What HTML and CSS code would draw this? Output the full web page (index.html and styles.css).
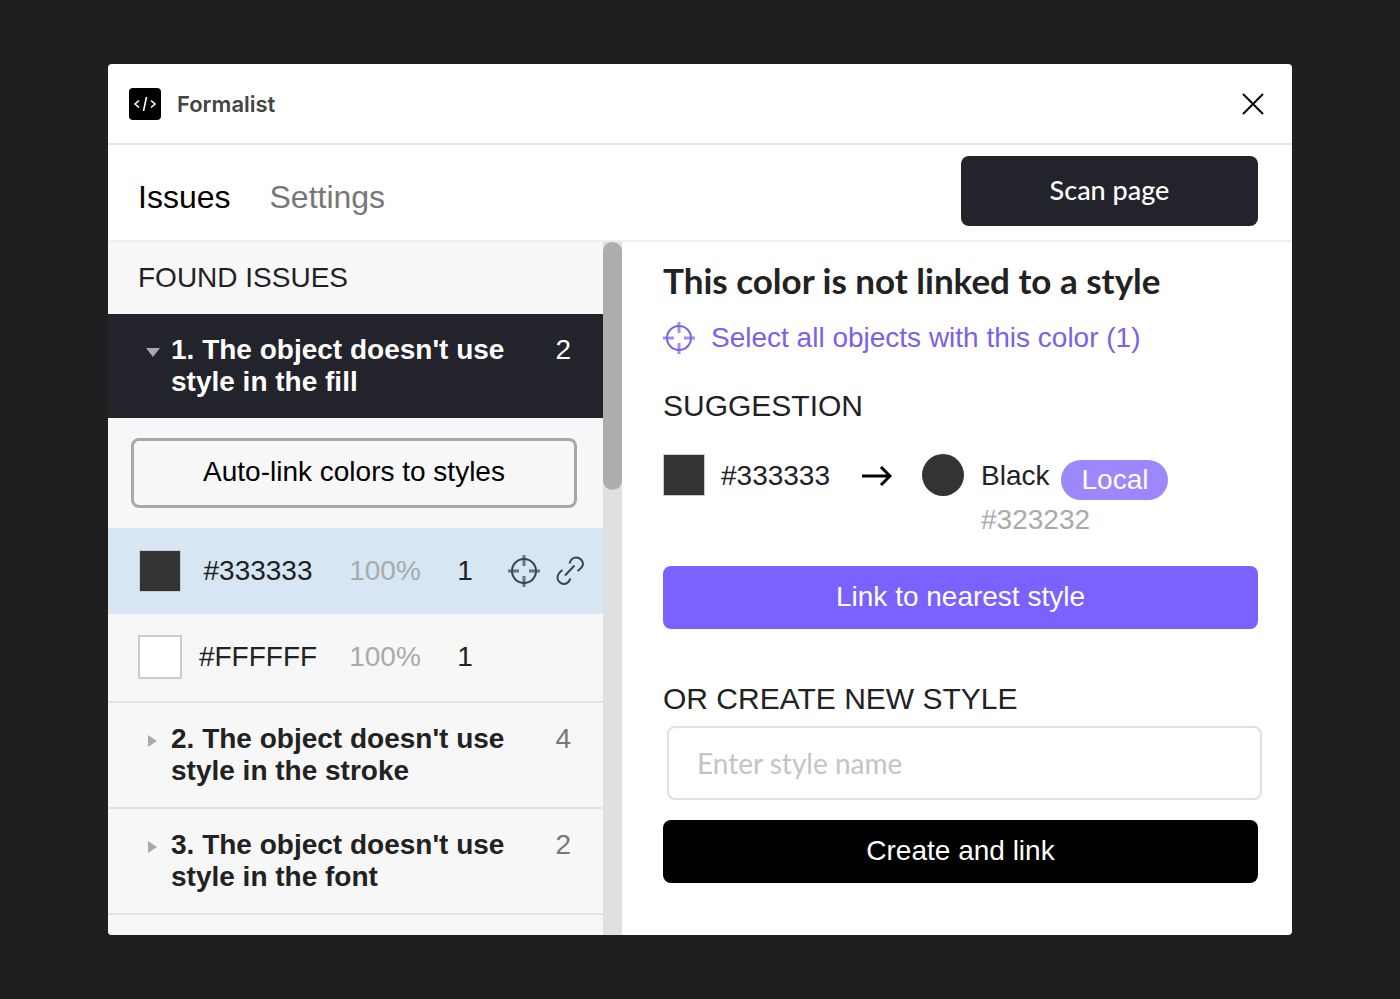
FILE: index.html
```html
<!DOCTYPE html>
<html lang="en">
<head>
    <meta charset="UTF-8">
    <meta name="viewport" content="width=device-width, initial-scale=1.0">
    <title>Formalist</title>
    <link rel="stylesheet" href="styles.css">
</head>
<body>
    <!-- Shared icons -->
    <svg class="sprite" aria-hidden="true">
        <symbol id="icon-target" viewBox="0 0 32 32">
            <g fill="none" stroke="currentColor">
                <circle cx="16" cy="16" r="12" stroke-width="2"/>
                <path d="M16 0v11M16 21v11M0 16h11M21 16h11" stroke-width="3" opacity="0.7"/>
            </g>
        </symbol>
        <symbol id="icon-link" viewBox="0 0 28 30">
            <g fill="none" stroke="currentColor" stroke-width="2">
                <path d="M13.500 7.500C14.500 4 17 1.500 20 1.500C24 1.500 27 4.500 27 8C27 10 25.500 12 21.500 15"/>
                <path d="M6.500 14C3 16.500 1.500 18.500 1.500 21.500C1.500 25 4.500 28 8 28C11 28 13 26 14.500 22.500"/>
                <path d="M9 19.500L18.500 9.500"/>
            </g>
        </symbol>
    </svg>

    <div class="window">
        <header class="titlebar">
            <svg class="logo" viewBox="0 0 32 32" aria-hidden="true">
                <rect width="32" height="32" rx="4" fill="#000"/>
                <path d="M10 12.500L6 16L10 19.500M22 12.500L26 16L22 19.500M17.500 9L14.500 23" fill="none" stroke="#fff" stroke-width="1.600"/>
            </svg>
            <span class="app-name">Formalist</span>
            <button class="close" aria-label="Close">
                <svg viewBox="0 0 22 22" width="22" height="22"><path d="M1 1L21 21M21 1L1 21" stroke="#000" stroke-width="2"/></svg>
            </button>
        </header>

        <nav class="toolbar">
            <a class="tab active" href="#issues">Issues</a>
            <a class="tab" href="#settings">Settings</a>
            <button class="btn scan">Scan page</button>
        </nav>

        <div class="content">
            <aside class="sidebar">
                <div class="issues">
                    <h2 class="list-title">FOUND ISSUES</h2>

                    <button class="group open" aria-expanded="true">
                        <span class="caret"></span>
                        <span class="group-name">1. The object doesn't use style in the fill</span>
                        <span class="group-count">2</span>
                    </button>
                    <div class="group-body">
                        <button class="btn auto-link">Auto-link colors to styles</button>
                        <div class="color-row selected">
                            <span class="swatch dark"></span>
                            <span>#333333</span>
                            <span class="opacity">100%</span>
                            <span>1</span>
                            <span class="actions">
                                <button class="icon-btn" aria-label="Select objects"><svg width="32" height="32"><use href="#icon-target"/></svg></button>
                                <button class="icon-btn" aria-label="Link to style"><svg width="28" height="30"><use href="#icon-link"/></svg></button>
                            </span>
                        </div>
                        <div class="color-row">
                            <span class="swatch"></span>
                            <span>#FFFFFF</span>
                            <span class="opacity">100%</span>
                            <span>1</span>
                        </div>
                    </div>

                    <button class="group" aria-expanded="false">
                        <span class="caret"></span>
                        <span class="group-name">2. The object doesn't use style in the stroke</span>
                        <span class="group-count">4</span>
                    </button>
                    <button class="group" aria-expanded="false">
                        <span class="caret"></span>
                        <span class="group-name">3. The object doesn't use style in the font</span>
                        <span class="group-count">2</span>
                    </button>
                </div>
                <div class="scrollbar"><div class="thumb"></div></div>
            </aside>

            <main class="detail">
                <h1>This color is not linked to a style</h1>
                <a class="select-all" href="#select">
                    <svg width="32" height="32" aria-hidden="true"><use href="#icon-target"/></svg>
                    Select all objects with this color (1)
                </a>

                <h2 class="section-title">SUGGESTION</h2>
                <div class="suggestion">
                    <span class="swatch dark"></span>
                    <span class="from">#333333</span>
                    <svg class="arrow" viewBox="0 0 30 22" aria-hidden="true"><path d="M0 11H28M19 2L28 11L19 20" fill="none" stroke="#000" stroke-width="3"/></svg>
                    <span class="dot"></span>
                    <div class="style-info">
                        <div class="style-name">Black <span class="badge">Local</span></div>
                        <div class="style-hex">#323232</div>
                    </div>
                </div>
                <button class="btn primary">Link to nearest style</button>

                <label class="section-title" for="styleName">OR CREATE NEW STYLE</label>
                <input class="style-input" type="text" id="styleName" placeholder="Enter style name">
                <button class="btn create">Create and link</button>
            </main>
        </div>
    </div>
</body>
</html>
```

FILE: styles.css
```css
* {
    margin: 0;
    padding: 0;
    box-sizing: border-box;
}

body {
    display: flex;
    min-height: 100vh;
    padding: 64px 108px;
    background: #1f1f1f;
    color: #222;
    font-family: "Liberation Sans", Arial, sans-serif;
    font-size: 28px;
    line-height: 32px;
}

button,
input {
    font: inherit;
    color: inherit;
    background: none;
    border: none;
}

button {
    cursor: pointer;
}

a {
    text-decoration: none;
}

svg {
    display: block;
    flex: none;
}

.sprite {
    position: absolute;
    width: 0;
    height: 0;
}

.window {
    flex: 1;
    display: flex;
    flex-direction: column;
    background: #fff;
    border-radius: 4px;
    overflow: hidden;
}

/* Title bar */
.titlebar {
    display: flex;
    align-items: center;
    gap: 16px;
    height: 81px;
    padding: 0 28px 0 21px;
    border-bottom: 2px solid #e5e5e5;
}

.logo {
    width: 32px;
    height: 32px;
}

.app-name {
    font-family: Inter, sans-serif;
    font-size: 22px;
    font-weight: 600;
    color: #444;
}

.close {
    margin-left: auto;
}

/* Tabs */
.toolbar {
    display: flex;
    align-items: center;
    gap: 39px;
    padding: 11px 34px 14px 30px;
    border-bottom: 2px solid #efefef;
}

.tab {
    padding-top: 12px;
    font-size: 32px;
    color: #777;
}

.tab.active {
    color: #000;
}

.btn {
    height: 63px;
    padding-bottom: 2px;
    border-radius: 8px;
    color: #fff;
    text-align: center;
}

.scan {
    width: 297px;
    height: 70px;
    margin-left: auto;
    background: #23232b;
    font-family: Lato, sans-serif;
    font-size: 27px;
    font-weight: 500;
}

.content {
    flex: 1;
    display: flex;
}

/* Issue list */
.sidebar {
    display: flex;
    width: 514px;
    background: #f7f7f7;
}

.issues {
    flex: 1;
}

.list-title {
    padding: 20px 30px;
    font-size: 28px;
    font-weight: 400;
}

.group {
    display: flex;
    align-items: flex-start;
    width: 100%;
    padding: 20px 32px 20px 38px;
    border-bottom: 2px solid #e3e3e3;
    text-align: left;
}

.group.open {
    background: #23232b;
    color: #fff;
    border-bottom: none;
}

.caret {
    margin: 12px 14px 0 2px;
    border-left: 9px solid #aaa;
    border-top: 6px solid transparent;
    border-bottom: 6px solid transparent;
}

.group.open .caret {
    margin: 14px 11px 0 0;
    border-top: 9px solid #aaa;
    border-left: 7px solid transparent;
    border-right: 7px solid transparent;
    border-bottom: none;
}

.group-name {
    width: 360px;
    font-weight: 700;
}

.group-count {
    margin-left: auto;
    color: #777;
}

.group.open .group-count {
    color: #fff;
}

.group-body {
    padding: 20px 0 1px;
    border-bottom: 2px solid #e3e3e3;
}

.auto-link {
    display: block;
    width: calc(100% - 49px);
    height: 70px;
    margin: 0 26px 20px 23px;
    border: 3px solid #a8a8a8;
    color: #000;
}

.color-row {
    display: grid;
    grid-template-columns: 44px 152px 102px 58px 1fr;
    align-items: center;
    height: 86px;
    padding-left: 30px;
    text-align: center;
}

.color-row.selected {
    background: #d6e7f3;
}

.swatch {
    width: 44px;
    height: 44px;
    background: #fff;
    border: 2px solid #ccc;
}

.swatch.dark {
    justify-self: center;
    width: 42px;
    height: 42px;
    background: #333;
    border-width: 1px;
}

.opacity {
    color: #aaa;
}

.actions {
    display: flex;
    align-items: center;
    gap: 16px;
    padding-left: 14px;
}

.icon-btn {
    color: #3a444c;
}

.scrollbar {
    width: 19px;
    background: #e0e0e0;
}

.thumb {
    height: 248px;
    border-radius: 10px;
    background: #adadad;
}

/* Detail pane */
.detail {
    flex: 1;
    padding: 16px 34px 52px 41px;
}

h1 {
    font-family: Lato, sans-serif;
    font-size: 35px;
    font-weight: 700;
    line-height: 44px;
}

.select-all {
    display: flex;
    align-items: center;
    gap: 16px;
    padding: 20px 0;
    color: #7b61e8;
}

.section-title {
    display: block;
    font-size: 30px;
    font-weight: 400;
}

.select-all + .section-title {
    padding-top: 16px;
}

.suggestion {
    display: flex;
    align-items: flex-start;
    padding: 32px 0 30px;
    color: #222;
}

.from {
    padding: 6px 32px 0 16px;
}

.arrow {
    width: 30px;
    height: 22px;
    margin: 11px 30px 0 0;
}

.dot {
    width: 42px;
    height: 42px;
    border-radius: 50%;
    background: #333;
}

.style-info {
    padding: 6px 0 0 17px;
}

.style-name {
    display: flex;
    align-items: flex-start;
    gap: 12px;
}

.badge {
    padding: 4px 20px;
    border-radius: 20px;
    background: #9c87ff;
    color: #fff;
}

.style-hex {
    margin-top: 4px;
    color: #aaa;
}

.primary,
.create {
    display: block;
    width: 100%;
}

.primary {
    margin-bottom: 54px;
    background: #7b61ff;
}

.style-input {
    display: block;
    width: 100%;
    height: 74px;
    margin: 11px 0 20px 4px;
    padding: 0 28px;
    border: 2px solid #e0e0e0;
    border-radius: 8px;
    font-family: Lato, sans-serif;
}

.style-input::placeholder {
    color: #c4c4c4;
}

.create {
    background: #000;
}
```
